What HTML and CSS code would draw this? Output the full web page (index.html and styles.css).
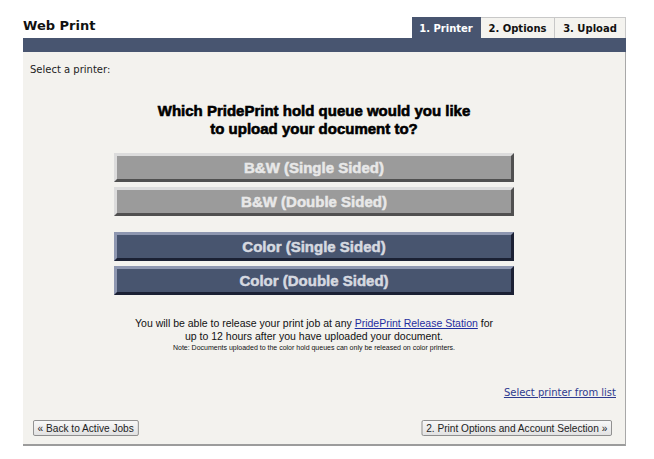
FILE: index.html
```html
<!DOCTYPE html>
<html>
<head>
<meta charset="utf-8">
<link rel="stylesheet" href="styles.css">
</head>
<body>
<div class="page">
  <div class="header">
    <h1 class="title">Web Print</h1>
    <div class="tabs">
      <span class="tab active">1. Printer</span>
      <span class="tab">2. Options</span>
      <span class="tab">3. Upload</span>
    </div>
  </div>
  <div class="bar"></div>
  <div class="panel">
    <p class="select">Select a printer:</p>
    <div class="center">
      <h2 class="question">Which PridePrint hold queue would you like<br>to upload your document to?</h2>
      <div class="choices">
        <div class="group">
          <button class="choice gray">B&amp;W (Single Sided)</button>
          <button class="choice gray">B&amp;W (Double Sided)</button>
        </div>
        <div class="group">
          <button class="choice color">Color (Single Sided)</button>
          <button class="choice color">Color (Double Sided)</button>
        </div>
      </div>
      <p class="info">You will be able to release your print job at any <a href="#" class="info-link">PridePrint Release Station</a> for<br>up to 12 hours after you have uploaded your document.</p>
      <p class="note">Note: Documents uploaded to the color hold queues can only be released on color printers.</p>
    </div>
    <div class="list-row"><a href="#" class="list-link">Select printer from list</a></div>
    <div class="nav">
      <button class="nav-btn">« Back to Active Jobs</button>
      <button class="nav-btn">2. Print Options and Account Selection »</button>
    </div>
  </div>
</div>
</body>
</html>
```

FILE: styles.css
```css
html, body {
  margin: 0;
  padding: 0;
  background: #ffffff;
}
.page {
  width: 603px;
  padding: 17px 0 0 23px;
  font-family: "DejaVu Sans", Verdana, sans-serif;
}
.header {
  display: flex;
  justify-content: space-between;
  align-items: flex-end;
  height: 21px;
}
.title {
  margin: 0;
  font-size: 13px;
  font-weight: bold;
  line-height: 16px;
  color: #111;
  padding-bottom: 4px;
}
.tabs {
  display: flex;
  height: 21px;
}
.tab {
  display: flex;
  align-items: center;
  justify-content: center;
  box-sizing: border-box;
  height: 21px;
  font-size: 10px;
  font-weight: bold;
  color: #111;
  background: #f4f3ef;
  border-top: 1px solid #c8c8c8;
  border-right: 1px solid #c8c8c8;
}
.tab:nth-child(1) { width: 69px; }
.tab:nth-child(2) { width: 74px; }
.tab:nth-child(3) { width: 71px; }
.tab.active {
  background: #485570;
  color: #ffffff;
  border-color: #485570;
}
.bar {
  height: 14px;
  background: #485570;
}
.panel {
  background: #f3f2ee;
  border-right: 1px solid #a8a8a8;
  border-bottom: 2px solid #9c9c9c;
  padding: 11px 0 0 0;
  box-sizing: border-box;
  height: 394px;
}
.select {
  margin: 0;
  padding-left: 7px;
  font-size: 10px;
  line-height: 13px;
  color: #222;
}
.center {
  width: 582px;
}
.question {
  margin: 26px 0 0 0;
  text-align: center;
  font-family: "Liberation Sans", Arial, sans-serif;
  font-size: 15px;
  font-weight: bold;
  line-height: 18px;
  color: #000;
  -webkit-text-stroke: 0.6px #000;
}
.choices {
  width: 400px;
  margin: 15px auto 0;
  display: flex;
  flex-direction: column;
  gap: 16px;
}
.group {
  display: flex;
  flex-direction: column;
  gap: 5px;
}
.choice {
  display: block;
  width: 400px;
  height: 29px;
  box-sizing: border-box;
  border-width: 3px;
  border-style: solid;
  font-family: "Liberation Sans", Arial, sans-serif;
  font-size: 15px;
  font-weight: bold;
  padding: 0;
  line-height: 20px;
  -webkit-text-stroke: 0.5px currentColor;
}
.choice.gray {
  background: #9b9b9b;
  color: #e8e8e8;
  border-color: #dcdcdc #505050 #505050 #dcdcdc;
}
.choice.color {
  background: #48556f;
  color: #d6d9e0;
  border-color: #8e97b0 #1b2134 #1b2134 #8e97b0;
}
.info {
  margin: 22px 0 0 0;
  text-align: center;
  font-family: "Liberation Sans", Arial, sans-serif;
  font-size: 10.5px;
  line-height: 13px;
  color: #111;
}
.info-link {
  color: #1f2ea0;
  text-decoration: underline;
}
.note {
  margin: 0;
  text-align: center;
  font-family: "Liberation Sans", Arial, sans-serif;
  font-size: 7px;
  line-height: 9px;
  color: #111;
}
.list-row {
  margin-top: 29px;
  padding-right: 9px;
  text-align: right;
}
.list-link {
  font-size: 10px;
  color: #2d3a8f;
  text-decoration: underline;
}
.nav {
  display: flex;
  justify-content: space-between;
  margin-top: 20px;
  padding: 0 13px 0 10px;
}
.nav-btn {
  height: 16px;
  box-sizing: border-box;
  padding: 0 4px;
  font-family: "Liberation Sans", Arial, sans-serif;
  font-size: 11px;
  line-height: 13px;
  color: #222;
  background: linear-gradient(#f8f8f8, #e2e2e2);
  border: 1px solid #8a8a8a;
  border-radius: 2px;
  transform: scaleX(0.92);
}
.nav-btn:first-child { transform-origin: left center; }
.nav-btn:last-child { transform-origin: right center; }
```
